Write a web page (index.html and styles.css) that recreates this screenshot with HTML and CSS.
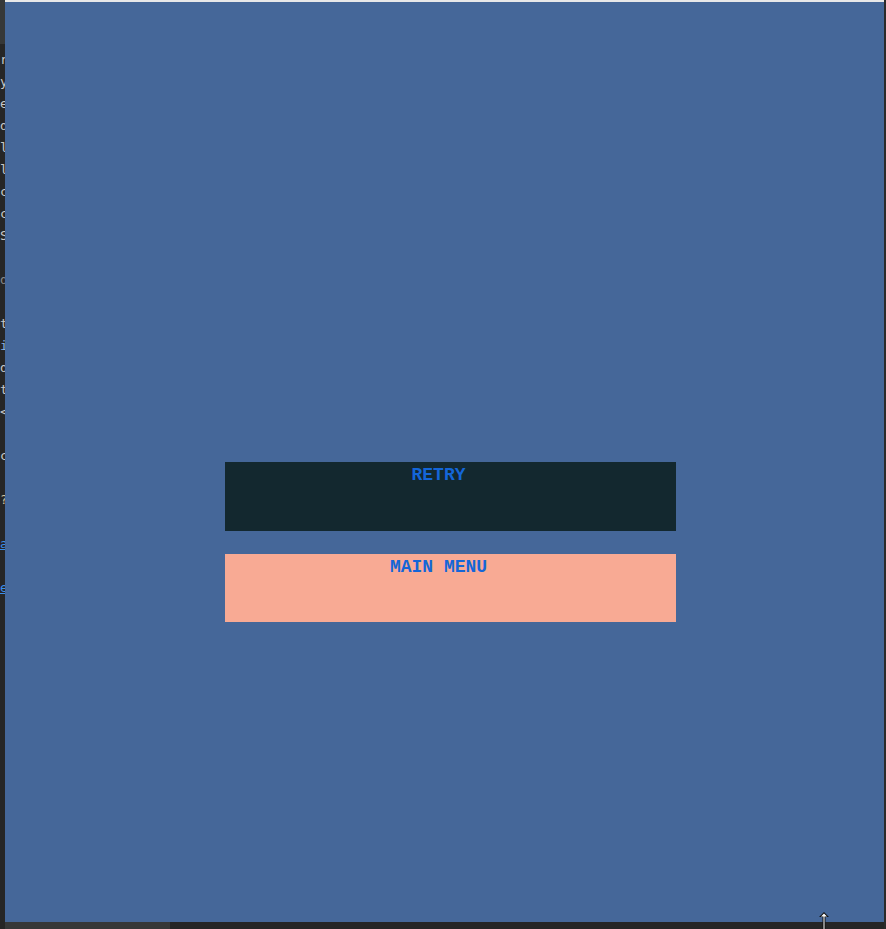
FILE: index.html
```html
<!DOCTYPE html>
<html>
<head>
<meta charset="utf-8">
<link rel="stylesheet" href="styles.css">
</head>
<body>
<div class="screen">
  <div class="gutter">
    <div class="gutter-head"></div>
    <div class="gutter-code">
      <span>r</span><span>y</span><span>e</span><span>d</span><span>l</span><span>l</span><span>c</span><span>c</span><span>S</span><span>&nbsp;</span><span class="dim">d</span><span>&nbsp;</span><span>t</span><span class="blue">i</span><span>d</span><span>t</span><span>&lt;</span><span>&nbsp;</span><span>c</span><span>&nbsp;</span><span class="tan">?</span><span>&nbsp;</span><span class="link">a</span><span>&nbsp;</span><span class="link">e</span>
    </div>
  </div>
  <div class="main">
    <div class="topline"></div>
    <div class="panel">
      <div class="menu">
        <button class="btn btn-retry">RETRY</button>
        <button class="btn btn-menu">MAIN MENU</button>
      </div>
    </div>
    <div class="bottom"></div>
  </div>
  <div class="rightedge"></div>
</div>
<svg class="cursor" width="12" height="18" viewBox="0 0 12 18">
  <path d="M6 1 L11 6 L7.5 6 L7.5 18 L4.5 18 L4.5 6 L1 6 Z" fill="#111"/>
  <path d="M6 2.5 L9 5.5 L6.5 5.5 L6.5 18 L5.5 18 L5.5 5.5 L3 5.5 Z" fill="#fff"/>
</svg>
</body>
</html>
```
FILE: styles.css
```css
html, body {
  margin: 0;
  padding: 0;
  background: #252525;
  width: 886px;
  height: 929px;
  overflow: hidden;
}
.screen {
  display: flex;
  width: 886px;
  height: 929px;
}
.gutter {
  width: 5px;
  flex: none;
  overflow: hidden;
  background: #262626;
  display: flex;
  flex-direction: column;
}
.gutter-head {
  height: 44px;
  background: #363838;
  flex: none;
}
.gutter-code {
  display: flex;
  flex-direction: column;
  padding-top: 5px;
  font-family: "DejaVu Sans Mono", monospace;
  font-size: 13px;
  line-height: 22px;
  color: #c8c8c8;
  white-space: pre;
}
.gutter-code .dim { color: #888; }
.gutter-code .blue { color: #8ab4e8; }
.gutter-code .tan { color: #d8c8a0; }
.gutter-code .link { color: #3b8eea; text-decoration: underline; }
.main {
  width: 879px;
  flex: none;
  display: flex;
  flex-direction: column;
}
.topline {
  height: 2px;
  background: #e8e8e8;
  flex: none;
}
.panel {
  height: 920px;
  flex: none;
  background: #456799;
}
.bottom {
  flex: 1;
  background: linear-gradient(to right, #363838 165px, #252525 165px);
}
.rightedge {
  flex: 1;
  background: #2a2a2a;
}
.menu {
  display: flex;
  flex-direction: column;
  gap: 23px;
  padding-top: 460px;
  padding-left: 220px;
}
.btn {
  width: 451px;
  height: 69px;
  border: none;
  margin: 0;
  padding: 3px 24px 0 0;
  display: flex;
  justify-content: center;
  align-items: flex-start;
  font-family: "Liberation Mono", "Courier New", monospace;
  font-weight: bold;
  font-size: 18px;
  line-height: 20px;
  color: #1466d8;
}
.btn-retry { background: #13282f; }
.btn-menu { background: #f8aa94; height: 68px; }
.cursor {
  position: absolute;
  left: 818px;
  top: 911px;
}
```
